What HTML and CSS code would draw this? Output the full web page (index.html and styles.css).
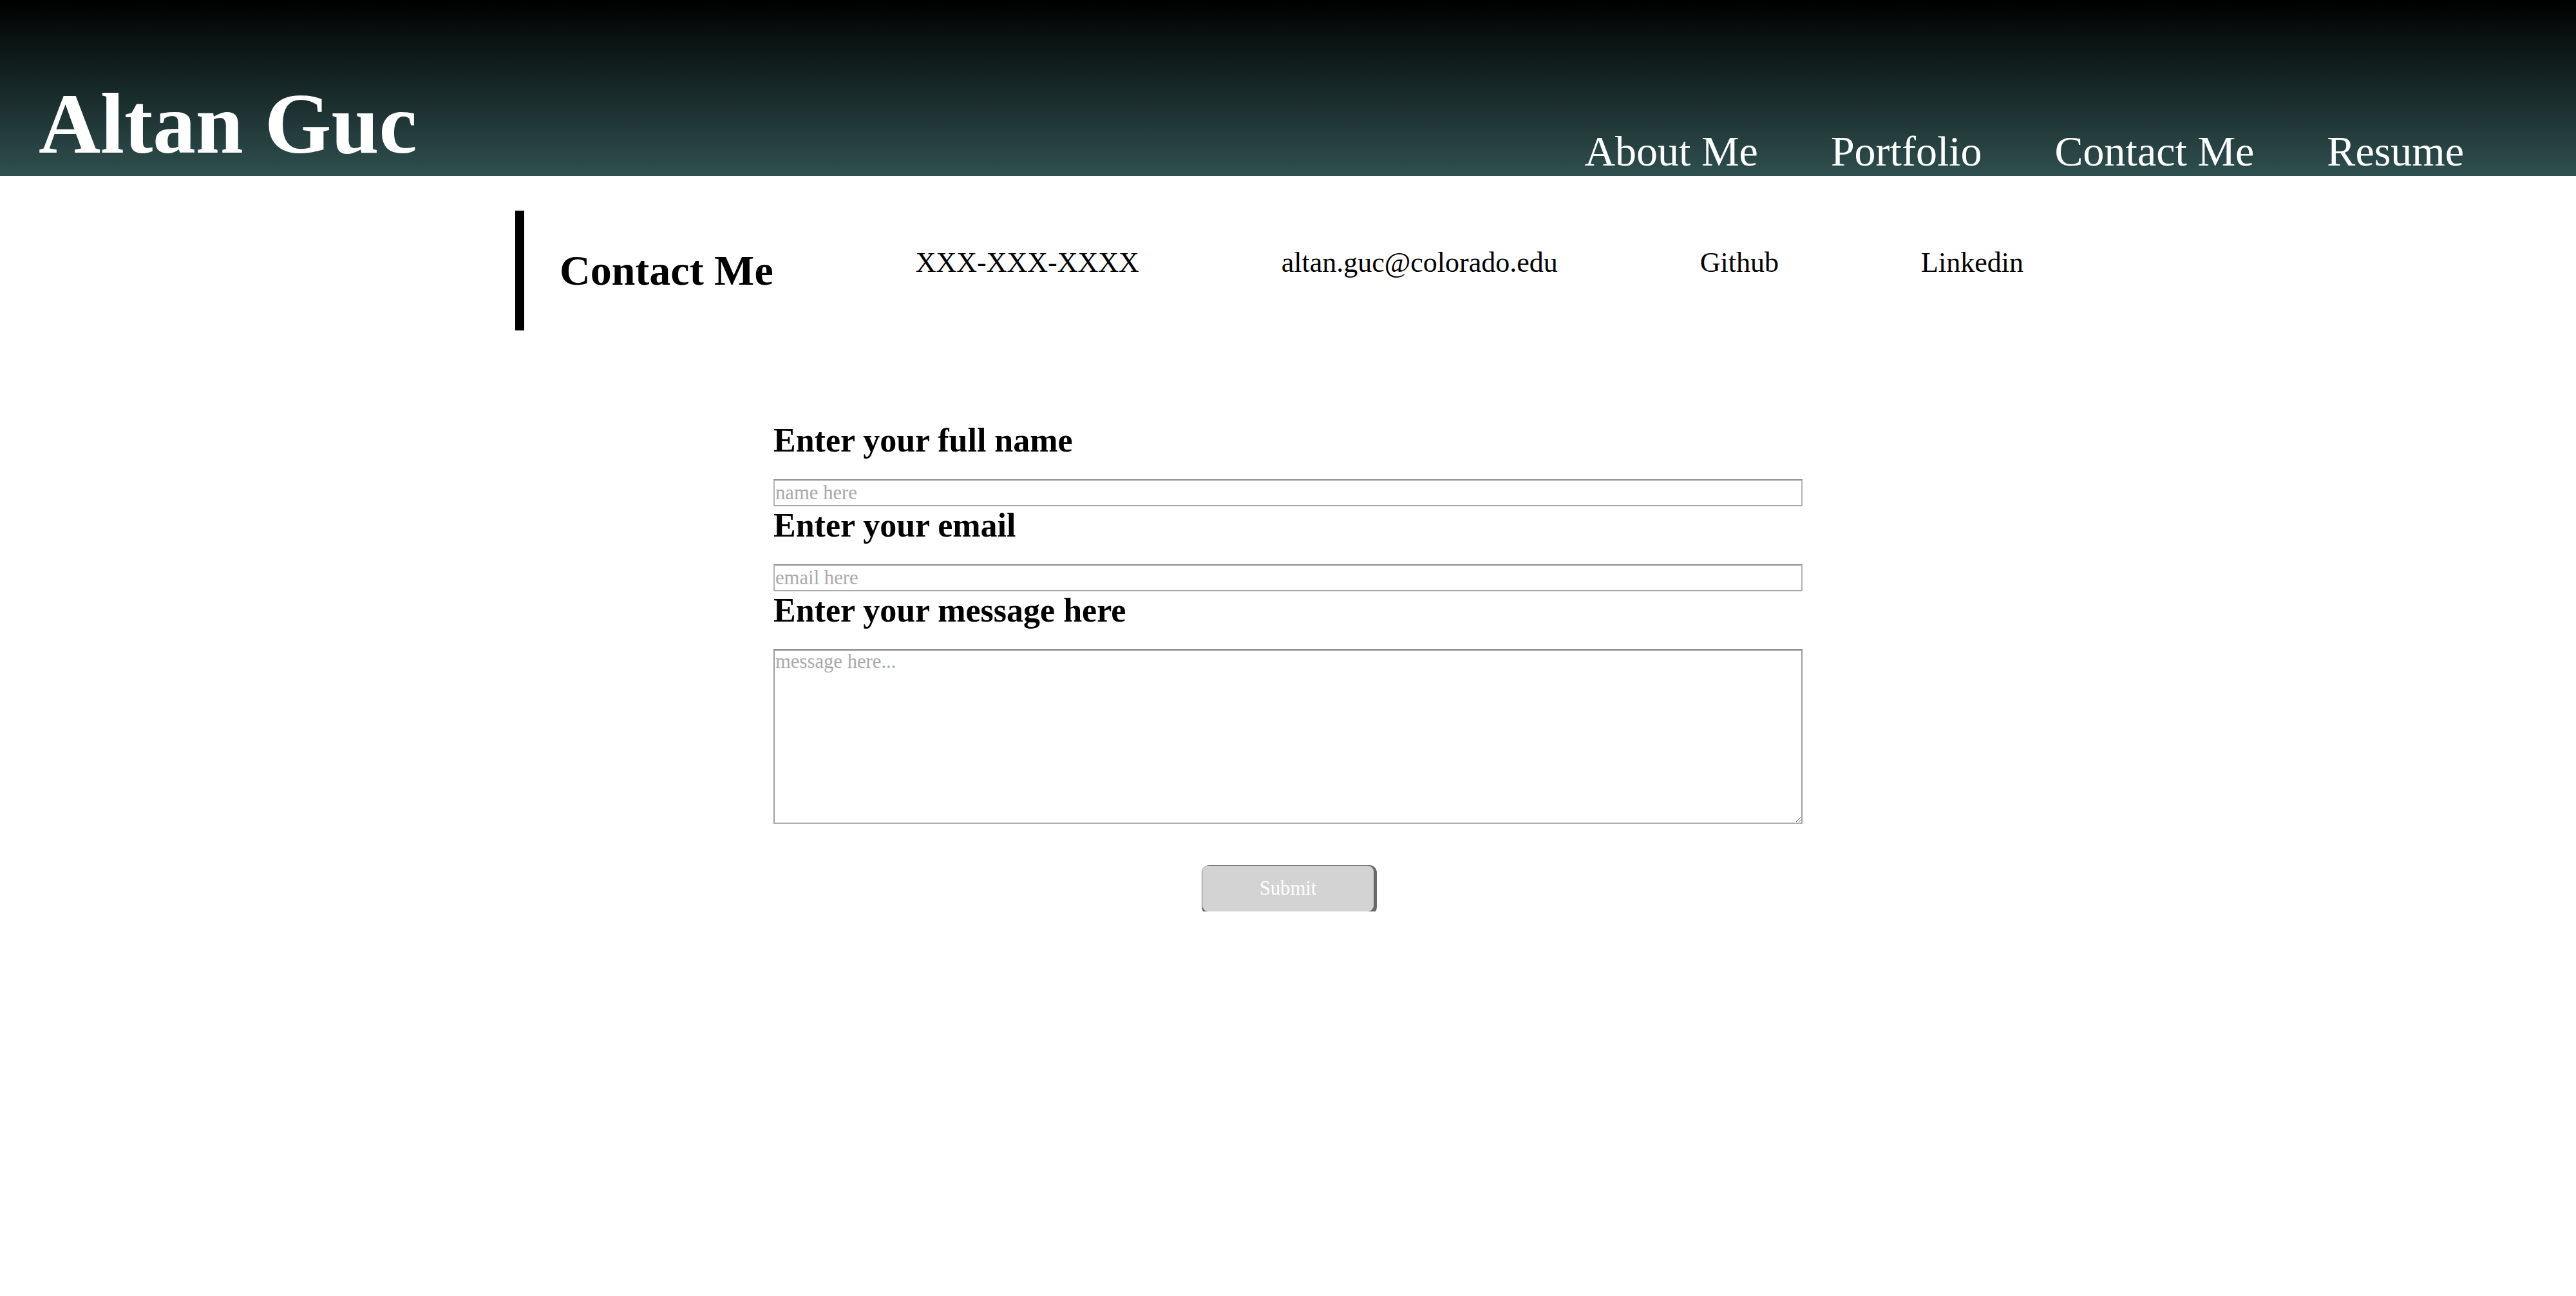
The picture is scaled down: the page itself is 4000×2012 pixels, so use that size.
FILE: index.html
```html
<!DOCTYPE html>
<html lang="en">
<head>
<meta charset="utf-8">
<title>Altan Guc - Contact Me</title>
<link rel="stylesheet" href="styles.css">
</head>
<body>
<header class="site-header">
  <h1 class="site-title">Altan Guc</h1>
  <nav class="site-nav">
    <a class="nav-link" href="#">About Me</a>
    <a class="nav-link" href="#">Portfolio</a>
    <a class="nav-link" href="#">Contact Me</a>
    <a class="nav-link" href="#">Resume</a>
  </nav>
</header>
<main class="content">
  <section class="contact-bar">
    <h2 class="contact-title">Contact Me</h2>
    <span class="contact-item">XXX-XXX-XXXX</span>
    <span class="contact-item">altan.guc@colorado.edu</span>
    <a class="contact-item" href="#">Github</a>
    <a class="contact-item" href="#">Linkedin</a>
  </section>
  <form class="contact-form">
    <label class="field-label" for="name">Enter your full name</label>
    <input class="field-input" id="name" type="text" placeholder="name here">
    <label class="field-label" for="email">Enter your email</label>
    <input class="field-input" id="email" type="email" placeholder="email here">
    <label class="field-label" for="message">Enter your message here</label>
    <textarea class="field-area" id="message" placeholder="message here..."></textarea>
    <button class="submit-btn" type="submit">Submit</button>
  </form>
</main>
</body>
</html>
```

FILE: styles.css
```css
html, body {
  margin: 0;
  padding: 0;
  background: #ffffff;
}

body {
  font-family: "Liberation Serif", "Times New Roman", serif;
  color: #000000;
}

.site-header {
  height: 273px;
  box-sizing: border-box;
  display: flex;
  align-items: flex-end;
  justify-content: space-between;
  padding: 0 174px 0 60px;
  background: linear-gradient(to bottom, #000000 0%, #2f4f4f 100%);
}

.site-title {
  margin: 0 0 4px 0;
  font-size: 133px;
  font-weight: bold;
  line-height: normal;
  color: #ffffff;
}

.site-nav {
  display: flex;
  gap: 113px;
}

.nav-link {
  font-size: 66px;
  line-height: normal;
  color: #ffffff;
  text-decoration: none;
}

.content {
  display: flex;
  flex-direction: column;
}

.contact-bar {
  margin: 54px 0 0 800px;
  height: 186px;
  box-sizing: border-box;
  border-left: 14px solid #000000;
  padding: 55px 0 0 55px;
  display: flex;
  align-items: flex-start;
  gap: 221px;
}

.contact-title {
  margin: 0;
  font-size: 66px;
  font-weight: bold;
  line-height: normal;
}

.contact-item {
  font-size: 44px;
  line-height: normal;
  color: #000000;
  text-decoration: none;
}

.contact-form {
  width: 1598px;
  margin: 141px auto 0 auto;
  display: flex;
  flex-direction: column;
}

.field-label {
  display: block;
  margin: 0 0 31px 0;
  font-size: 52px;
  font-weight: bold;
  line-height: normal;
}

.field-input,
.field-area {
  display: block;
  width: 1598px;
  box-sizing: border-box;
  margin: 0;
  padding: 0 1px;
  font-family: "Liberation Serif", "Times New Roman", serif;
  font-size: 30.7px;
  color: #000000;
  background: #ffffff;
  border-style: solid;
  border-width: 2px;
  border-color: #8a8a8a #b4b4b4 #a8a8a8 #b4b4b4;
  border-radius: 0;
  outline: none;
}

.field-input {
  height: 42px;
}

.field-area {
  height: 271px;
  border-color: #7c7c7c #9c9c9c #b0b0b0 #9c9c9c;
  resize: both;
}

.field-input::placeholder,
.field-area::placeholder {
  color: #a9a9a9;
}

.submit-btn {
  display: block;
  align-self: center;
  width: 266px;
  height: 71px;
  margin-top: 65px;
  padding: 0;
  font-family: "Liberation Serif", "Times New Roman", serif;
  font-size: 30.7px;
  color: #ffffff;
  background: #d3d3d3;
  border: none;
  border-radius: 9px;
  box-shadow: 2px 2px 0 3px #696969;
}
```
